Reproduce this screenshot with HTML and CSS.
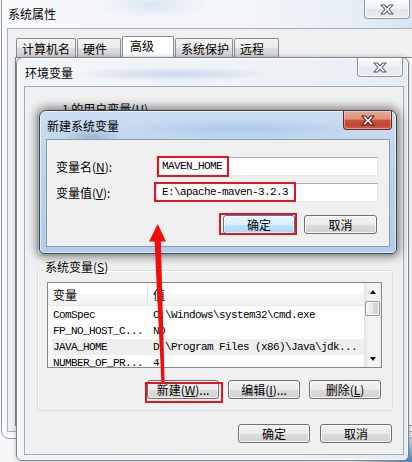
FILE: index.html
```html
<!DOCTYPE html>
<html lang="zh-CN">
<head>
<meta charset="utf-8">
<title>环境变量</title>
<link rel="stylesheet" href="styles.css">
</head>
<body>
<div class="win win-a">
  <div class="tbar">
    <span class="ttl">系统属性</span>
    <span class="cbtn">
      <svg width="14" height="11" viewBox="0 0 14 11"><polygon points="1,1 4.6,1 7,3.8 9.4,1 13,1 9,5.5 13,10 9.4,10 7,7.2 4.6,10 1,10 5,5.5" fill="#fff" stroke="#4f5964" stroke-width="1.1" stroke-linejoin="round"/></svg>
    </span>
  </div>
  <div class="client client-a">
    <div class="tabs">
      <div class="tab t1">计算机名</div>
      <div class="tab t2">硬件</div>
      <div class="tab t3 sel">高级</div>
      <div class="tab t4">系统保护</div>
      <div class="tab t5">远程</div>
    </div>
    <div class="tabpanel"></div>
  </div>
</div>

<div class="win win-b">
  <div class="tbar">
    <span class="ttl">环境变量</span>
    <span class="cbtn">
      <svg width="14" height="11" viewBox="0 0 14 11"><polygon points="1,1 4.6,1 7,3.8 9.4,1 13,1 9,5.5 13,10 9.4,10 7,7.2 4.6,10 1,10 5,5.5" fill="#fff" stroke="#4f5964" stroke-width="1.1" stroke-linejoin="round"/></svg>
    </span>
  </div>
  <div class="client client-b">
    <fieldset class="grp grp-user">
      <legend>1 的用户变量(<u>U</u>)</legend>
    </fieldset>
    <fieldset class="grp grp-sys">
      <legend>系统变量(<u>S</u>)</legend>
      <div class="lv">
        <div class="lv-main">
          <div class="lv-head">
            <div class="h1">变量</div>
            <div class="h2">值</div>
          </div>
          <div class="lv-rows">
            <div class="row"><span class="c1 mono">ComSpec</span><span class="c2 mono">C:\Windows\system32\cmd.exe</span></div>
            <div class="row"><span class="c1 mono">FP_NO_HOST_C...</span><span class="c2 mono">NO</span></div>
            <div class="row hl"><span class="c1 mono">JAVA_HOME</span><span class="c2 mono">D:\Program Files (x86)\Java\jdk...</span></div>
            <div class="row"><span class="c1 mono">NUMBER_OF_PR...</span><span class="c2 mono">4</span></div>
          </div>
        </div>
        <div class="sb">
          <div class="sb-btn"><span class="tri-up"></span></div>
          <div class="thumb"></div>
          <div class="sb-track"></div>
          <div class="sb-btn"><span class="tri-down"></span></div>
        </div>
      </div>
      <div class="btnrow">
        <div class="btn w72 mark">新建(<u>W</u>)...<span class="rbox rb-new"></span></div>
        <div class="btn w72">编辑(<u>I</u>)...</div>
        <div class="btn w72">删除(<u>L</u>)</div>
      </div>
    </fieldset>
    <div class="btnrow bottom">
      <div class="btn w72">确定</div>
      <div class="btn w72">取消</div>
    </div>
  </div>
</div>

<div class="win win-c">
  <div class="tbar">
    <span class="ttl">新建系统变量</span>
    <span class="cbtn red">
      <svg width="14" height="11" viewBox="0 0 14 11"><polygon points="1,1 4.6,1 7,3.8 9.4,1 13,1 9,5.5 13,10 9.4,10 7,7.2 4.6,10 1,10 5,5.5" fill="#fff" stroke="#3d1b17" stroke-width="1.1" stroke-linejoin="round"/></svg>
    </span>
  </div>
  <div class="client client-c">
    <div class="frow">
      <span class="flabel">变量名(<u>N</u>):</span>
      <div class="finput mono">MAVEN_HOME<span class="rbox rb-name"></span></div>
    </div>
    <div class="frow">
      <span class="flabel">变量值(<u>V</u>):</span>
      <div class="finput mono">E:\apache-maven-3.2.3<span class="rbox rb-val"></span></div>
    </div>
    <div class="btnrow cbtns">
      <div class="btn w72 def">确定<span class="rbox rb-ok"></span></div>
      <div class="btn w73">取消</div>
    </div>
  </div>
</div>

<svg class="arrow" width="412" height="462" viewBox="0 0 412 462">
  <polygon points="154.5,239 160.8,239 164.6,383 161.4,383" fill="#f20d0d"/>
  <polygon points="157.7,224 166,241.5 149,241.5" fill="#f20d0d"/>
</svg>
</body>
</html>
```

FILE: styles.css
```css
* { box-sizing: border-box; }

body {
  margin: 0;
  width: 412px;
  height: 462px;
  overflow: hidden;
  position: relative;
  font-family: "Noto Sans CJK SC", "Noto Sans", sans-serif;
  font-size: 12px;
  color: #000;
  background:
    radial-gradient(60px 30px at 100% 100%, #4d85c8 0%, rgba(77,133,200,0.5) 50%, rgba(77,133,200,0) 100%),
    #f6f8fa;
}

u { text-decoration: underline; text-underline-offset: 1px; }

.mono {
  font-family: "Liberation Mono", "DejaVu Sans Mono", monospace;
  font-size: 11px;
  letter-spacing: -0.6px;
}

/* red arrow annotation, drawn over everything */
.arrow {
  position: absolute;
  left: 0;
  top: 0;
  z-index: 10;
  pointer-events: none;
}

/* ---------- windows ---------- */
.win {
  position: absolute;
  display: flex;
  flex-direction: column;
}
.tbar {
  display: flex;
  justify-content: space-between;
  align-items: flex-start;
  flex: none;
}
.ttl { line-height: 16px; white-space: nowrap; }

.cbtn {
  width: 46px;
  height: 19px;
  flex: none;
  display: flex;
  align-items: center;
  justify-content: center;
  border: 1px solid #8d97a1;
  border-top: none;
  border-radius: 0 0 4px 4px;
  background: linear-gradient(#f8fafb, #eef1f4 50%, #e3e7eb 51%, #e9edf1);
  box-shadow: inset 0 0 0 1px rgba(255,255,255,0.8);
}
.cbtn.red {
  width: 49px;
  border-color: #5f2a25;
  background: linear-gradient(#e9aa99 0%, #de8f7c 45%, #c9503c 52%, #c24431 80%, #d2664e 100%);
  box-shadow: inset 0 0 0 1px rgba(255,220,210,0.45);
}

/* window A : 系统属性 */
.win-a {
  left: 1px;
  top: -10px;
  width: 415px;
  height: 449px;
  border: 1px solid #8f99a3;
  border-radius: 8px;
  background:
    radial-gradient(60px 14px at 150px 14px, rgba(150,185,225,0.25), rgba(150,185,225,0)),
    linear-gradient(90deg, #f7f9fb 0%, #f3f6f9 55%, #e7eef6 85%, #d6e4f2 100%);
  box-shadow: inset 0 0 0 1px rgba(255,255,255,0.8);
}
.win-a .tbar { height: 37px; padding-left: 6px; }
.win-a .ttl { margin-top: 15px; }
.win-a .cbtn { margin-top: 9px; margin-right: 5px; }

.client-a {
  flex: 1;
  margin: 0 0 6px 5px;
  background: #f0f0f0;
  border: 1px solid #a7b0ba;
  border-right: none;
  padding: 9px 0 5px 7px;
  display: flex;
  flex-direction: column;
}
.tabs {
  display: flex;
  gap: 1px;
  margin-left: 1px;
  height: 19px;
  flex: none;
}
.tab {
  height: 19px;
  border: 1px solid #898c95;
  border-bottom: none;
  border-radius: 2px 2px 0 0;
  background: linear-gradient(#f3f3f3, #ebebeb 50%, #dddddd 51%, #d4d4d4);
  padding: 2px 0 0 5px;
  line-height: 16px;
  white-space: nowrap;
}
.t1 { width: 60px; }
.t2 { width: 44px; }
.t3 { width: 52px; }
.t4 { width: 58px; }
.t5 { width: 45px; }
.tab.sel {
  background: #fff;
  margin-top: -2px;
  height: 21px;
  padding-left: 7px;
  padding-top: 1px;
}
.tabpanel {
  flex: 1;
  background: #fff;
  border: 1px solid #898c95;
  border-right: none;
}

/* window B : 环境变量 */
.win-b {
  left: 16px;
  top: 57px;
  width: 393px;
  height: 404px;
  border: 1px solid #7b8590;
  border-radius: 7px 7px 6px 6px;
  background:
    radial-gradient(100px 7px at 158px 16px, rgba(110,150,205,0.30), rgba(110,150,205,0)),
    linear-gradient(90deg, #f2f5f8 0%, #eef2f6 70%, #e4ebf3 100%);
  box-shadow: 0 0 5px rgba(0,0,0,0.25), inset 0 0 0 1px rgba(255,255,255,0.85);
}
.win-b .tbar { height: 28px; padding-left: 8px; }
.win-b .ttl { margin-top: 7px; }
.win-b .cbtn { margin-right: 5px; }

.client-b {
  flex: 1;
  margin: 0 4px 5px 7px;
  background: #f0f0f0;
  border: 1px solid #a2acb6;
  display: flex;
  flex-direction: column;
}

.grp {
  margin: 0 10px 0 12px;
  min-width: 0;
  border: 1px solid #d5dfe5;
  border-radius: 3px;
  padding: 2px 10px 11px 9px;
  box-shadow: inset 1px 1px 0 #fff;
}
.grp legend {
  padding: 0 2px 6px 2px;
  line-height: 14px;
  margin-left: -4px;
  white-space: nowrap;
}
.grp-user {
  margin-top: 15px;
  height: 154px;
  flex: none;
}
.grp-user legend { margin-left: 13px; }
.grp-sys { margin-top: 4px; flex: none; }

/* list view */
.lv {
  height: 86px;
  border: 1px solid #828790;
  background: #fff;
  display: flex;
  overflow: hidden;
}
.lv-main {
  flex: 1;
  min-width: 0;
  display: flex;
  flex-direction: column;
  overflow: hidden;
}
.lv-head {
  height: 23px;
  flex: none;
  display: flex;
  align-items: stretch;
  background: linear-gradient(#ffffff, #ffffff 50%, #f7f8fa 51%, #f1f2f4);
  border-bottom: 1px solid #e5e7ea;
}
.lv-head .h1 {
  width: 100px;
  padding-left: 5px;
  border-right: 1px solid #dfe2e7;
  display: flex;
  align-items: center;
}
.lv-head .h2 {
  flex: 1;
  padding-left: 5px;
  display: flex;
  align-items: center;
}
.lv-rows { padding-top: 1px; }
.row {
  display: flex;
  height: 16px;
  line-height: 16px;
  margin-left: 4px;
  white-space: nowrap;
}
.row.hl { background: #efefef; }
.row .c1 { width: 96px; padding-left: 1px; overflow: hidden; flex: none; }
.row .c2 { padding-left: 5px; }

/* scroll bar */
.sb {
  width: 17px;
  flex: none;
  display: flex;
  flex-direction: column;
  background: linear-gradient(90deg, #e3e3e3, #f2f2f2 25%, #f4f4f4 75%, #ebebeb);
}
.sb-btn {
  height: 17px;
  flex: none;
  display: flex;
  align-items: center;
  justify-content: center;
}
.sb-track { flex: 1; }
.thumb {
  height: 15px;
  margin: 1px 1px 0 1px;
  border: 1px solid #979797;
  border-radius: 2px;
  background: linear-gradient(90deg, #f4f4f4, #e8e8e8 50%, #d9d9d9 51%, #cfcfcf);
  box-shadow: inset 0 0 0 1px rgba(255,255,255,0.8);
}
.tri-up, .tri-down {
  width: 0;
  height: 0;
  border-left: 3.5px solid transparent;
  border-right: 3.5px solid transparent;
}
.tri-up { border-bottom: 4px solid #111; }
.tri-down { border-top: 4px solid #111; }

/* buttons */
.btnrow {
  display: flex;
  justify-content: flex-end;
  gap: 9px;
}
.grp-sys .btnrow { margin-top: 12px; margin-right: 1px; }
.btnrow.bottom { margin-top: 13px; padding-right: 11px; gap: 10px; }

.btn {
  position: relative;
  height: 19px;
  border: 1px solid #707070;
  border-radius: 3px;
  background: linear-gradient(#f3f3f3 0%, #ebebeb 50%, #dddddd 51%, #d1d1d1 100%);
  box-shadow: inset 0 0 0 1px rgba(255,255,255,0.75);
  display: flex;
  align-items: center;
  justify-content: center;
  line-height: 16px;
  white-space: nowrap;
}
.w72 { width: 72px; }
.w73 { width: 73px; }
.btn.def {
  border-color: #3c7fb1;
  background: linear-gradient(#eaf6fd 0%, #d9f0fc 50%, #bee6fd 51%, #a7d9f5 100%);
  box-shadow: inset 0 0 0 1px rgba(255,255,255,0.6);
}

/* red annotation boxes */
.rbox {
  position: absolute;
  border: 2px solid #e8141b;
  pointer-events: none;
}
.rb-new { left: -3px; top: 1px; width: 78px; height: 21px; }
.rb-ok { left: -5px; top: -3px; width: 78px; height: 22px; }
.rb-name { left: 0px; top: -2px; width: 72px; height: 21px; }
.rb-val { left: -3px; top: -2px; width: 142px; height: 20px; }

/* window C : 新建系统变量 */
.win-c {
  left: 39px;
  top: 110px;
  width: 358px;
  height: 144px;
  border: 1px solid #34414f;
  border-radius: 7px 7px 5px 5px;
  background:
    radial-gradient(30px 8px at 52px 26px, rgba(70,90,120,0.30), rgba(70,90,120,0)),
    radial-gradient(120px 10px at 200px 18px, rgba(150,185,225,0.5), rgba(150,185,225,0)),
    linear-gradient(#c9ddf2 0%, #bcd4ed 40%, #b3cdea 100%);
  box-shadow: 0 0 10px 3px rgba(0,0,0,0.45), inset 0 0 0 1px rgba(255,255,255,0.6);
}
.win-c .tbar { height: 28px; padding-left: 7px; }
.win-c .ttl { margin-top: 7px; }
.win-c .cbtn { margin-right: 4px; }

.client-c {
  flex: 1;
  margin: 0 6px 6px 6px;
  background: #f0f0f0;
  border: 1px solid #8a9bae;
  padding: 17px 11px 0 9px;
  display: flex;
  flex-direction: column;
}
.frow {
  display: flex;
  align-items: center;
  height: 19px;
}
.frow + .frow { margin-top: 7px; }
.flabel { width: 100px; flex: none; line-height: 16px; white-space: nowrap; }
.finput {
  position: relative;
  flex: 1;
  height: 19px;
  background: #fff;
  border: 1px solid #e2e3ea;
  border-top-color: #abadb3;
  border-bottom-color: #e3e9ef;
  padding-left: 5px;
  line-height: 17px;
  white-space: nowrap;
}
.cbtns { margin-top: 13px; padding-right: 1px; }
```
